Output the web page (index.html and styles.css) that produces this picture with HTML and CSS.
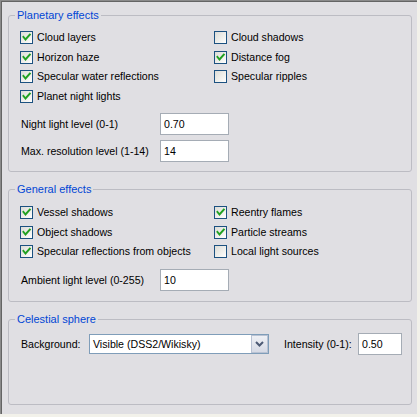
FILE: index.html
```html
<!DOCTYPE html>
<html>
<head>
<meta charset="utf-8">
<link rel="stylesheet" href="styles.css">
</head>
<body>
<div class="panel">
  <section class="group g1">
    <span class="group-title">Planetary effects</span>
    <div class="checks">
      <label class="chk"><span class="box"><svg viewBox="0 0 11 11" width="11" height="11"><path d="M2.5 5 L4.5 7.5 L8.8 2.6" /></svg></span>Cloud layers</label>
      <label class="chk"><span class="box"></span>Cloud shadows</label>
      <label class="chk"><span class="box"><svg viewBox="0 0 11 11" width="11" height="11"><path d="M2.5 5 L4.5 7.5 L8.8 2.6" /></svg></span>Horizon haze</label>
      <label class="chk"><span class="box"><svg viewBox="0 0 11 11" width="11" height="11"><path d="M2.5 5 L4.5 7.5 L8.8 2.6" /></svg></span>Distance fog</label>
      <label class="chk"><span class="box"><svg viewBox="0 0 11 11" width="11" height="11"><path d="M2.5 5 L4.5 7.5 L8.8 2.6" /></svg></span>Specular water reflections</label>
      <label class="chk"><span class="box"></span>Specular ripples</label>
      <label class="chk"><span class="box"><svg viewBox="0 0 11 11" width="11" height="11"><path d="M2.5 5 L4.5 7.5 L8.8 2.6" /></svg></span>Planet night lights</label>
    </div>
    <div class="fields">
      <div class="field"><span class="flabel">Night light level (0-1)</span><span class="input">0.70</span></div>
      <div class="field"><span class="flabel">Max. resolution level (1-14)</span><span class="input">14</span></div>
    </div>
  </section>

  <section class="group g2">
    <span class="group-title">General effects</span>
    <div class="checks">
      <label class="chk"><span class="box"><svg viewBox="0 0 11 11" width="11" height="11"><path d="M2.5 5 L4.5 7.5 L8.8 2.6" /></svg></span>Vessel shadows</label>
      <label class="chk"><span class="box"><svg viewBox="0 0 11 11" width="11" height="11"><path d="M2.5 5 L4.5 7.5 L8.8 2.6" /></svg></span>Reentry flames</label>
      <label class="chk"><span class="box"><svg viewBox="0 0 11 11" width="11" height="11"><path d="M2.5 5 L4.5 7.5 L8.8 2.6" /></svg></span>Object shadows</label>
      <label class="chk"><span class="box"><svg viewBox="0 0 11 11" width="11" height="11"><path d="M2.5 5 L4.5 7.5 L8.8 2.6" /></svg></span>Particle streams</label>
      <label class="chk"><span class="box"><svg viewBox="0 0 11 11" width="11" height="11"><path d="M2.5 5 L4.5 7.5 L8.8 2.6" /></svg></span>Specular reflections from objects</label>
      <label class="chk"><span class="box"></span>Local light sources</label>
    </div>
    <div class="fields">
      <div class="field"><span class="flabel">Ambient light level (0-255)</span><span class="input">10</span></div>
    </div>
  </section>

  <section class="group g3">
    <span class="group-title">Celestial sphere</span>
    <div class="sphere-row">
      <span class="bg-label">Background:</span>
      <div class="select">
        <span class="select-text">Visible (DSS2/Wikisky)</span>
        <span class="select-btn"><svg viewBox="0 0 9 6" width="9" height="6"><path d="M1 1 L4.5 4.5 L8 1" /></svg></span>
      </div>
      <span class="int-label">Intensity (0-1):</span>
      <span class="input small">0.50</span>
    </div>
  </section>
</div>
</body>
</html>
```

FILE: styles.css
```css
html, body {
  margin: 0;
  padding: 0;
}

body {
  width: 420px;
  height: 417px;
  background: #f2f1ea;
  font-family: "Liberation Sans", Arial, sans-serif;
  font-size: 10.6px;
  color: #000;
  overflow: hidden;
}

.panel {
  box-sizing: border-box;
  width: 417px;
  height: 414px;
  background: #e0dfe3;
  border-top: 1px solid #8a8a8a;
  border-left: 1px solid #8a8a8a;
  box-shadow: inset 1px 1px 0 #646464;
  padding: 14px 0 0 7px;
}

.group {
  position: relative;
  box-sizing: border-box;
  width: 404px;
  border: 1px solid #bcbcc3;
  border-radius: 3px;
}

.g2, .g3 {
  margin-top: 17px;
}

.group-title {
  position: absolute;
  top: -7px;
  left: 6px;
  padding: 0 2px;
  line-height: 13px;
  background: #e0dfe3;
  color: #0046d5;
  font-size: 11px;
}

.g1 {
  padding: 15px 0 9px 11px;
}

.g2 {
  padding: 16px 0 10px 11px;
}

.g3 {
  height: 86px;
  padding: 13px 0 0 12px;
}

.checks {
  display: grid;
  grid-template-columns: 194px 1fr;
  grid-auto-rows: 13px;
  row-gap: 6.5px;
}

.chk {
  display: flex;
  align-items: center;
  gap: 4px;
  line-height: 13px;
  white-space: nowrap;
}

.box {
  box-sizing: border-box;
  flex: none;
  width: 13px;
  height: 13px;
  border: 1px solid #1c5180;
  background: linear-gradient(135deg, #dcdcd7 0%, #f4f4f1 70%, #ffffff 100%);
  display: flex;
}

.box svg path {
  fill: none;
  stroke: #21a121;
  stroke-width: 2;
  stroke-linecap: square;
  stroke-linejoin: miter;
}

.fields {
  margin-top: 10.5px;
  display: flex;
  flex-direction: column;
  gap: 5px;
}

.field {
  display: grid;
  grid-template-columns: 140px 69px;
  align-items: center;
}

.flabel {
  padding-left: 1px;
}

.input {
  box-sizing: border-box;
  height: 22px;
  border: 1px solid #a5acb5;
  background: #fff;
  padding-left: 3px;
  line-height: 20px;
}

.input.small {
  width: 44px;
}

.sphere-row {
  display: flex;
  align-items: center;
}

.bg-label {
  width: 68px;
}

.select {
  box-sizing: border-box;
  width: 180px;
  height: 20px;
  border: 1px solid #7f9db9;
  background: #fff;
  display: flex;
  align-items: center;
  justify-content: space-between;
  padding: 0 0 0 3px;
}

.select-text {
  line-height: 18px;
}

.select-btn {
  box-sizing: border-box;
  width: 17px;
  height: 18px;
  border: 1px solid #b9c2d3;
  background: linear-gradient(180deg, #eef0f5 0%, #d6dae5 100%);
  display: flex;
  align-items: center;
  justify-content: center;
}

.select-btn svg path {
  fill: none;
  stroke: #4d5a75;
  stroke-width: 2;
}

.int-label {
  margin-left: 15px;
  width: 74px;
}
```
